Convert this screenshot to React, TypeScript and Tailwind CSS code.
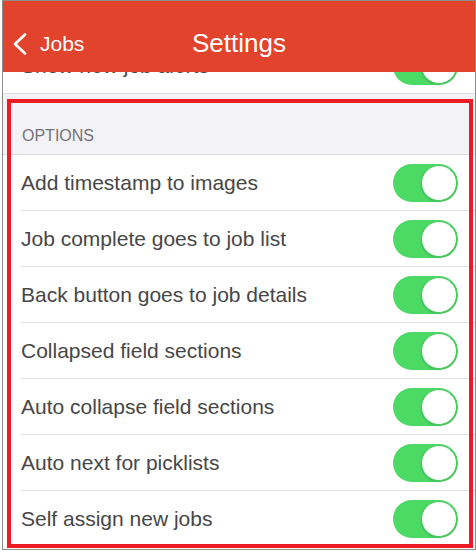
import React from "react";

const rows = [
  "Add timestamp to images",
  "Job complete goes to job list",
  "Back button goes to job details",
  "Collapsed field sections",
  "Auto collapse field sections",
  "Auto next for picklists",
  "Self assign new jobs",
];

function Toggle() {
  return (
    <div className="flex h-[38px] w-[65px] shrink-0 items-center justify-end rounded-full bg-[#4cd964] p-[1px]">
      <div className="h-[36px] w-[36px] rounded-full border border-[#43c85a] bg-white shadow-[0_1px_2px_rgba(0,0,0,0.15)]" />
    </div>
  );
}

export default function App() {
  return (
    <div
      className="h-[554px] w-[476px] bg-white pl-[2px]"
      style={{ fontFamily: '"Liberation Sans", Arial, sans-serif' }}
    >
      <div className="relative h-[550px] w-[474px] overflow-hidden border border-[#8c8c8c] bg-white">
        {/* Header */}
        <div className="grid h-[71px] grid-cols-[1fr_auto_1fr] items-center bg-[#e2432d] pt-[12px] text-white">
          <div className="flex items-center gap-[13px] pl-[10px] pt-[2px]">
            <svg width="14" height="22" viewBox="0 0 14 22" fill="none">
              <polyline
                points="12,1.5 2,11 12,20.5"
                stroke="white"
                strokeWidth="2.6"
                strokeLinecap="round"
                strokeLinejoin="round"
              />
            </svg>
            <span className="text-[21px] leading-none">Jobs</span>
          </div>
          <div className="text-[26px] leading-none">Settings</div>
          <div />
        </div>

        {/* partially scrolled row */}
        <div className="flex h-[21px] flex-col justify-end overflow-hidden">
          <div className="flex h-[55px] shrink-0 items-center justify-between pl-[18px] pr-[17px]">
            <span className="text-[21px] text-[#474747]">Show new job alerts</span>
            <Toggle />
          </div>
        </div>
        <div className="h-px bg-[#dedee2]" />

        {/* Section header */}
        <div className="flex h-[60px] items-end bg-[#f3f2f7] pb-[10px] pl-[19px]">
          <span className="text-[16px] uppercase leading-none text-[#727277]">Options</span>
        </div>
        <div className="h-px bg-[#dedee2]" />

        {/* rows */}
        <div className="flex flex-col bg-white">
          {rows.map((r, i) => (
            <div key={r} className="flex flex-col">
              <div className="flex h-[55px] items-center justify-between pl-[18px] pr-[17px]">
                <span className="text-[21px] text-[#474747]">{r}</span>
                <Toggle />
              </div>
              {i < rows.length - 1 && <div className="ml-[18px] h-px bg-[#e2e2e6]" />}
            </div>
          ))}
        </div>

        {/* red annotation box */}
        <div className="pointer-events-none absolute left-[4px] top-[98px] h-[449px] w-[466px] border-4 border-[#ec1c24]" />
      </div>
    </div>
  );
}
